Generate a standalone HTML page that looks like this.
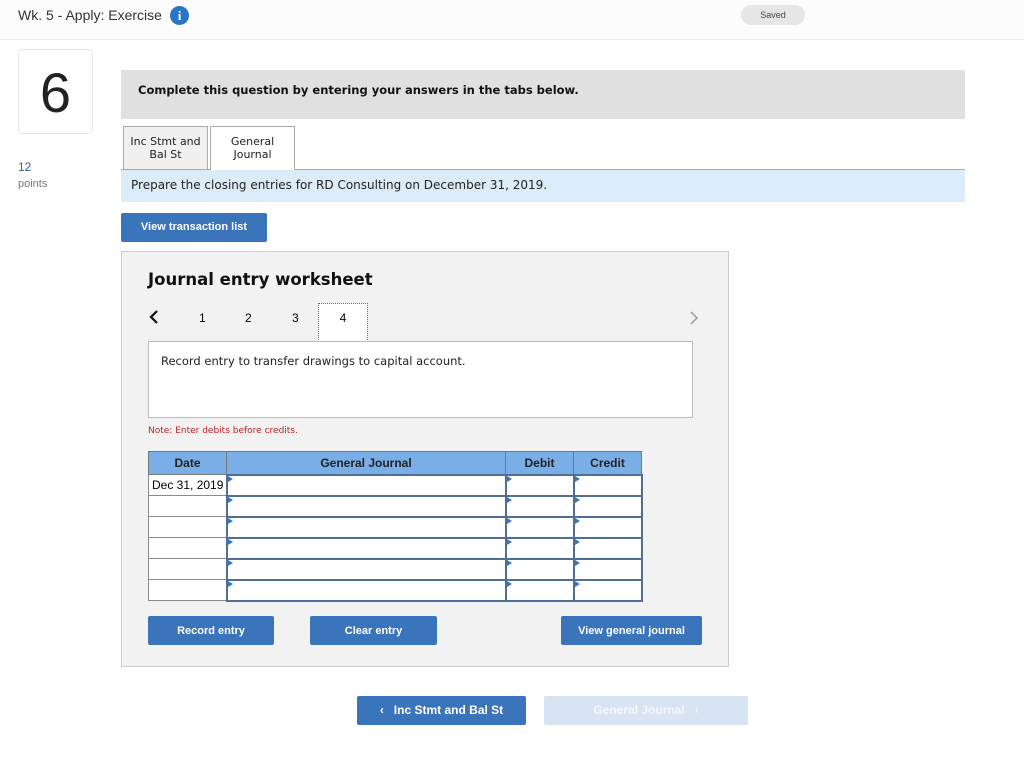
<!DOCTYPE html>
<html><head><style>
*{margin:0;padding:0;box-sizing:border-box}
body{width:1024px;height:772px;background:#fff;position:relative;font-family:"DejaVu Sans",Verdana,sans-serif;overflow:hidden}
.a{position:absolute}
.btn{position:absolute;background:#3a75bb;color:#fff;font-family:"Liberation Sans",Arial,sans-serif;font-weight:bold;font-size:11px;text-align:center;border-radius:2px}
table{border-collapse:collapse;position:absolute;left:148px;top:451px}
td{border:1px solid #8a8a8a;height:21px;padding:0;position:relative;background:#fff}
th{background:#7aaee6;border:1px solid #777;height:23px;font:bold 12px "Liberation Sans",Arial,sans-serif;color:#222}
td.i{border:2px solid #4f6f95}
td.i:before{content:"";position:absolute;left:0;top:0;border-left:5px solid #3a75bb;border-top:3px solid transparent;border-bottom:3px solid transparent}
</style></head><body>
<div class="a" style="left:0;top:0;width:1024px;height:40px;background:#fcfcfc;border-bottom:1px solid #eee"></div>
<div class="a" style="left:18px;top:7px;font:14px 'Liberation Sans',Arial,sans-serif;color:#333">Wk. 5 - Apply: Exercise</div>
<div class="a" style="left:170px;top:6px;width:19px;height:19px;border-radius:50%;background:#2a76c6;color:#fff;font:bold 13px 'Liberation Serif',serif;text-align:center;line-height:19px">i</div>
<div class="a" style="left:741px;top:5px;width:64px;height:20px;border-radius:10px;background:#e6e6e6;font:9px 'Liberation Sans',Arial,sans-serif;color:#444;text-align:center;line-height:20px">Saved</div>
<div class="a" style="left:18px;top:49px;width:75px;height:85px;border:1px solid #e6e6e6;border-radius:4px;font:56px 'Liberation Sans',Arial,sans-serif;color:#222;text-align:center;line-height:85px">6</div>
<div class="a" style="left:18px;top:160px;font:12px 'Liberation Sans',Arial,sans-serif;color:#2f5f9a">12</div>
<div class="a" style="left:18px;top:178px;font:11px 'Liberation Sans',Arial,sans-serif;color:#777">points</div>
<div class="a" style="left:121px;top:70px;width:844px;height:49px;background:#e0e0e0"></div>
<div class="a" style="left:138px;top:83px;font-weight:bold;font-size:11.5px;color:#111">Complete this question by entering your answers in the tabs below.</div>
<div class="a" style="left:121px;top:169px;width:844px;height:1px;background:#aaa"></div>
<div class="a" style="left:123px;top:126px;width:85px;height:44px;background:#f0f0f0;border:1px solid #aaa;font-size:11px;text-align:center;padding-top:8px;line-height:13px;color:#222">Inc Stmt and<br>Bal St</div>
<div class="a" style="left:210px;top:126px;width:85px;height:44px;background:#fff;border:1px solid #aaa;border-bottom:none;font-size:11px;text-align:center;padding-top:8px;line-height:13px;color:#222">General<br>Journal</div>
<div class="a" style="left:121px;top:170px;width:844px;height:32px;background:#dcebf8"></div>
<div class="a" style="left:131px;top:178px;font-size:12px;color:#222">Prepare the closing entries for RD Consulting on December 31, 2019.</div>
<div class="btn" style="left:121px;top:213px;width:146px;height:29px;line-height:29px">View transaction list</div>
<div class="a" style="left:121px;top:251px;width:608px;height:416px;background:#f2f2f2;border:1px solid #ccc"></div>
<div class="a" style="left:148px;top:270px;font-weight:bold;font-size:16.5px;color:#111">Journal entry worksheet</div>
<svg class="a" style="left:148px;top:309px" width="12" height="16"><path d="M9 2 L3 8 L9 14" stroke="#111" stroke-width="2.2" fill="none"/></svg>
<div class="a" style="left:199px;top:311px;font:12px 'Liberation Sans',Arial,sans-serif">1</div>
<div class="a" style="left:245px;top:311px;font:12px 'Liberation Sans',Arial,sans-serif">2</div>
<div class="a" style="left:292px;top:311px;font:12px 'Liberation Sans',Arial,sans-serif">3</div>
<div class="a" style="left:318px;top:303px;width:50px;height:39px;background:#fff;border:1px dotted #3a75bb;font:12px 'Liberation Sans',Arial,sans-serif;text-align:center;padding-top:7px">4</div>
<svg class="a" style="left:688px;top:310px" width="12" height="16"><path d="M3 2 L9 8 L3 14" stroke="#999" stroke-width="1.5" fill="none"/></svg>
<div class="a" style="left:148px;top:341px;width:545px;height:77px;background:#fff;border:1px solid #bbb"></div>
<div class="a" style="left:161px;top:354px;font-size:11.5px;color:#222">Record entry to transfer drawings to capital account.</div>
<div class="a" style="left:148px;top:426px;font-size:9px;color:#b22">Note: Enter debits before credits.</div>
<table>
<tr><th style="width:78px">Date</th><th style="width:279px">General Journal</th><th style="width:68px">Debit</th><th style="width:68px">Credit</th></tr>
<tr><td style="font:12px 'Liberation Sans',Arial,sans-serif;padding-left:3px">Dec 31, 2019</td><td class="i"></td><td class="i"></td><td class="i"></td></tr>
<tr><td></td><td class="i"></td><td class="i"></td><td class="i"></td></tr>
<tr><td></td><td class="i"></td><td class="i"></td><td class="i"></td></tr>
<tr><td></td><td class="i"></td><td class="i"></td><td class="i"></td></tr>
<tr><td></td><td class="i"></td><td class="i"></td><td class="i"></td></tr>
<tr><td></td><td class="i"></td><td class="i"></td><td class="i"></td></tr>
</table>
<div class="btn" style="left:148px;top:616px;width:126px;height:29px;line-height:30px">Record entry</div>
<div class="btn" style="left:310px;top:616px;width:127px;height:29px;line-height:30px">Clear entry</div>
<div class="btn" style="left:561px;top:616px;width:141px;height:29px;line-height:30px">View general journal</div>
<div class="btn" style="left:357px;top:696px;width:169px;height:29px;line-height:29px;font-size:12px">&lsaquo;&nbsp;&nbsp;&nbsp;Inc Stmt and Bal St</div>
<div class="btn" style="left:544px;top:696px;width:204px;height:29px;line-height:29px;font-size:12px;background:#d8e4f2;color:#f4f7fb">General Journal&nbsp;&nbsp;&nbsp;&rsaquo;</div>
</body></html>
